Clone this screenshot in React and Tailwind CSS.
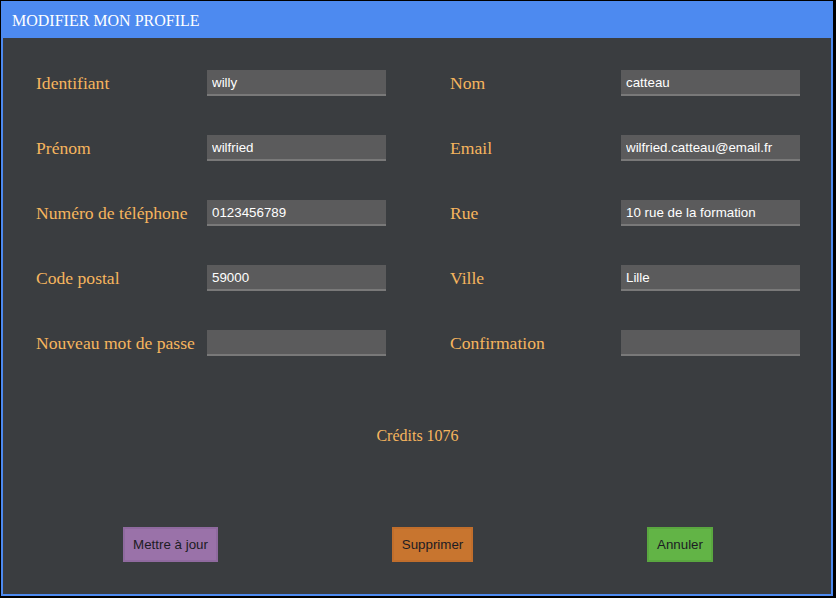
import React from 'react';

const fields = [
    ['Identifiant', 'willy', 'Nom', 'catteau'],
    ['Prénom', 'wilfried', 'Email', 'wilfried.catteau@email.fr'],
    ['Numéro de téléphone', '0123456789', 'Rue', '10 rue de la formation'],
    ['Code postal', '59000', 'Ville', 'Lille'],
    ['Nouveau mot de passe', '', 'Confirmation', ''],
];

function Field({ label, value }) {
    return (
        <div className="flex items-center h-[26px]">
            <label className="w-[171px] shrink-0 text-[17.6px] text-[#f6b55e] whitespace-nowrap font-['Liberation_Serif',serif]">{label}</label>
            <input
                type="text"
                defaultValue={value}
                className="w-[179px] h-[26px] bg-[#5b5b5c] border-b-2 border-[#797979] pl-[5px] text-[13.333px] text-white outline-none font-['Liberation_Sans',Arial,sans-serif]"
            />
        </div>
    );
}

export default function App() {
    return (
        <div className="w-[836px] h-[598px] bg-black pl-px pt-px pr-[3px] pb-[2px]">
            <div className="h-full flex flex-col border-2 border-[#4d8af0] bg-[#3a3d40]">
                <div className="h-[35px] shrink-0 bg-[#4d8af0] flex items-center pl-[9px] text-white text-[16px] font-['Liberation_Serif',serif]">
                    MODIFIER MON PROFILE
                </div>

                <div className="grid grid-cols-[350px_350px] gap-x-[64px] gap-y-[39px] pl-[33px] pt-[32px]">
                    {fields.map(([l1, v1, l2, v2]) => (
                        <React.Fragment key={l1}>
                            <Field label={l1} value={v1} />
                            <Field label={l2} value={v2} />
                        </React.Fragment>
                    ))}
                </div>

                <p className="mt-[70px] pl-px text-center text-[16px] leading-[20px] text-[#f6b55e] font-['Liberation_Serif',serif]">Crédits 1076</p>

                <div className="mt-[81px] pl-[2px] flex justify-center gap-[174px] text-[13.333px] text-[#1c1c24] font-['Liberation_Sans',Arial,sans-serif]">
                    <button className="h-[35px] w-[95px] bg-[#9a72a9] border-2 border-[#8f6a9f]">Mettre à jour</button>
                    <button className="h-[35px] w-[81px] bg-[#c8752f] border-2 border-[#c06e2c]">Supprimer</button>
                    <button className="h-[35px] w-[66px] bg-[#62b446] border-2 border-[#5aa740]">Annuler</button>
                </div>
            </div>
        </div>
    );
}
